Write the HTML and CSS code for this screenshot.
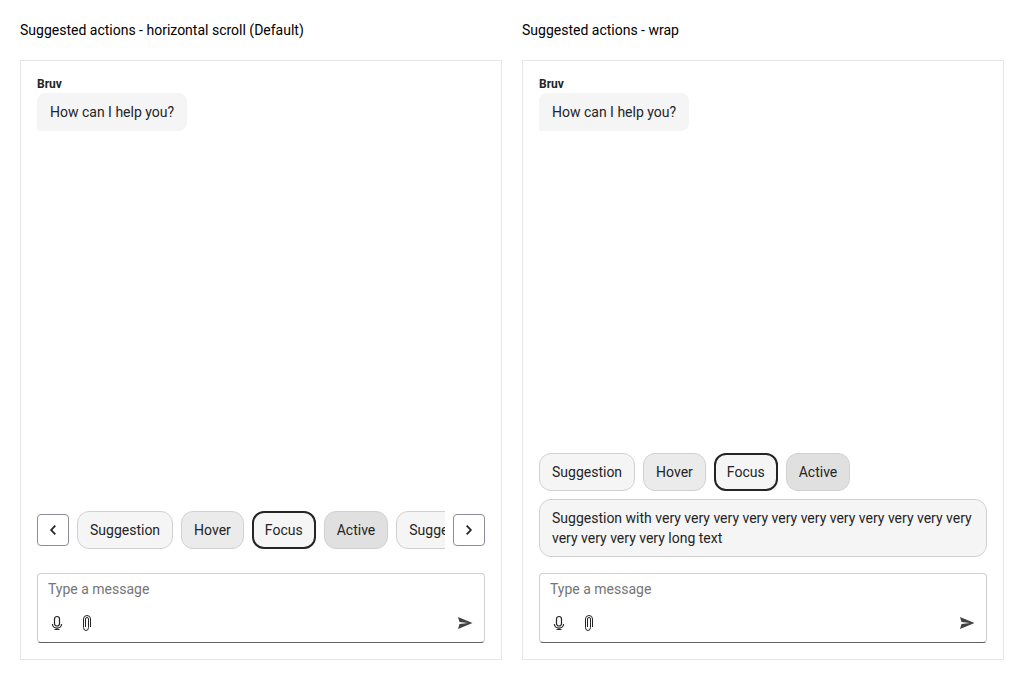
FILE: index.html
```html
<!DOCTYPE html>
<html lang="en">
<head>
<meta charset="utf-8">
<meta name="viewport" content="width=device-width, initial-scale=1">
<title>Suggested actions</title>
<link rel="stylesheet" href="styles.css">
</head>
<body>
<svg class="sprite" aria-hidden="true">
  <symbol id="icon-mic" viewBox="0 0 16 16"><g fill="none" stroke="currentColor" stroke-width="1.2"><rect x="5.500" y="1.500" width="5" height="9.500" rx="2.500"/><path d="M3.500 9v.5a4.500 3.500 0 0 0 9 0V9M8 13v1.500M5.500 14.500h5"/></g></symbol>
  <symbol id="icon-clip" viewBox="0 0 16 16"><path fill="none" stroke="currentColor" d="M6.500 12V4a1.500 1.500 0 0 1 3 0v8.500M11.500 12V4a3.500 3.500 0 0 0-7 0v8.500a2.500 3 0 0 0 5 0"/></symbol>
  <symbol id="icon-send" viewBox="0 0 16 16"><path fill="currentColor" d="M1 2l14.500 6L1 14l1.500-5L11 8 2.500 7z"/></symbol>
  <symbol id="icon-left" viewBox="0 0 16 16"><path fill="none" stroke="currentColor" stroke-width="1.800" d="M10.300 3.700L6.200 8l4.100 4.300"/></symbol>
  <symbol id="icon-right" viewBox="0 0 16 16"><path fill="none" stroke="currentColor" stroke-width="1.800" d="M5.700 3.700L9.800 8l-4.100 4.300"/></symbol>
</svg>
<main class="examples">
  <section class="example">
    <h2 class="title">Suggested actions - horizontal scroll (Default)</h2>
    <div class="chat">
      <div class="messages">
        <p class="author">Bruv</p>
        <p class="bubble">How can I help you?</p>
      </div>
      <div class="scroller">
        <button class="arrow" type="button" aria-label="Scroll left"><svg class="icon"><use href="#icon-left"/></svg></button>
        <div class="suggestions suggestions-scroll">
          <button class="chip" type="button">Suggestion</button>
          <button class="chip chip-hover" type="button">Hover</button>
          <button class="chip chip-focus" type="button">Focus</button>
          <button class="chip chip-active" type="button">Active</button>
          <button class="chip" type="button">Suggestion</button>
        </div>
        <button class="arrow" type="button" aria-label="Scroll right"><svg class="icon"><use href="#icon-right"/></svg></button>
      </div>
      <form class="composer">
        <textarea class="message-input" rows="1" placeholder="Type a message" aria-label="Message"></textarea>
        <div class="tools">
          <button class="tool" type="button" aria-label="Voice input"><svg class="icon"><use href="#icon-mic"/></svg></button>
          <button class="tool" type="button" aria-label="Attach file"><svg class="icon"><use href="#icon-clip"/></svg></button>
          <button class="tool tool-send" type="submit" aria-label="Send"><svg class="icon"><use href="#icon-send"/></svg></button>
        </div>
      </form>
    </div>
  </section>
  <section class="example">
    <h2 class="title">Suggested actions - wrap</h2>
    <div class="chat">
      <div class="messages">
        <p class="author">Bruv</p>
        <p class="bubble">How can I help you?</p>
      </div>
      <div class="suggestions suggestions-wrap">
        <button class="chip" type="button">Suggestion</button>
        <button class="chip chip-hover" type="button">Hover</button>
        <button class="chip chip-focus" type="button">Focus</button>
        <button class="chip chip-active" type="button">Active</button>
        <button class="chip" type="button">Suggestion with very very very very very very very very very very very very very very very long text</button>
      </div>
      <form class="composer">
        <textarea class="message-input" rows="1" placeholder="Type a message" aria-label="Message"></textarea>
        <div class="tools">
          <button class="tool" type="button" aria-label="Voice input"><svg class="icon"><use href="#icon-mic"/></svg></button>
          <button class="tool" type="button" aria-label="Attach file"><svg class="icon"><use href="#icon-clip"/></svg></button>
          <button class="tool tool-send" type="submit" aria-label="Send"><svg class="icon"><use href="#icon-send"/></svg></button>
        </div>
      </form>
    </div>
  </section>
</main>
</body>
</html>
```

FILE: styles.css
```css
*, *::before, *::after {
  box-sizing: border-box;
}

body {
  margin: 0;
  background: #fff;
  color: #000;
  font: 14px/20px Roboto, sans-serif;
}

button, textarea {
  font: inherit;
  color: inherit;
}

.sprite {
  display: none;
}

.icon {
  display: block;
  width: 16px;
  height: 16px;
}

.examples {
  display: grid;
  grid-template-columns: repeat(2, minmax(0, 1fr));
  gap: 20px;
  min-height: 100vh;
  padding: 20px;
}

.example {
  display: flex;
  flex-direction: column;
  gap: 20px;
}

.title {
  margin: 0;
  font-size: 14px;
  font-weight: 400;
}

.chat {
  display: flex;
  flex: 1;
  flex-direction: column;
  gap: 16px;
  padding: 16px;
  border: 1px solid #e6e6e6;
  color: #242424;
}

.messages {
  display: flex;
  flex: 1;
  flex-direction: column;
  align-items: flex-start;
  gap: 2px;
}

.author {
  margin: 0;
  font-size: 12px;
  font-weight: 700;
  line-height: 14px;
}

.bubble {
  margin: 0;
  padding: 8px 12px;
  border: 1px solid #f5f5f5;
  border-radius: 8px 8px 8px 2px;
  background: #f5f5f5;
}

.scroller {
  display: flex;
  align-items: center;
  gap: 8px;
  padding-bottom: 8px;
}

.arrow {
  display: grid;
  flex: none;
  place-items: center;
  width: 32px;
  height: 32px;
  padding: 0;
  border: 1px solid #8f8b9d;
  border-radius: 4px;
  background: #fff;
}

.suggestions {
  display: flex;
  gap: 8px;
}

.suggestions-scroll {
  flex: 1;
  min-width: 0;
  overflow: hidden;
}

.suggestions-scroll .chip {
  flex: none;
}

.suggestions-wrap {
  flex-wrap: wrap;
}

.chip {
  padding: 8px 12px;
  border: 1px solid #d1d1d1;
  border-radius: 12px;
  background: #f5f5f5;
  text-align: left;
}

.chip-hover {
  background: #ebebeb;
}

.chip-focus {
  padding: 7px 11px;
  border: 2px solid #242424;
}

.chip-active {
  background: #e0e0e0;
}

.composer {
  display: flex;
  flex-direction: column;
  border: 1px solid #d1d1d1;
  border-bottom-color: #616161;
  border-radius: 4px;
  background: #fff;
}

.message-input {
  height: 34px;
  padding: 5px 10px 9px;
  border: 0;
  outline: 0;
  background: none;
  resize: none;
}

.message-input::placeholder {
  color: #757575;
  opacity: 1;
}

.tools {
  display: flex;
  padding: 0 4px 4px;
}

.tool {
  display: grid;
  place-items: center;
  width: 30px;
  height: 30px;
  padding: 0;
  border: 0;
  background: none;
}

.tool-send {
  margin-left: auto;
  color: #424242;
}
```
